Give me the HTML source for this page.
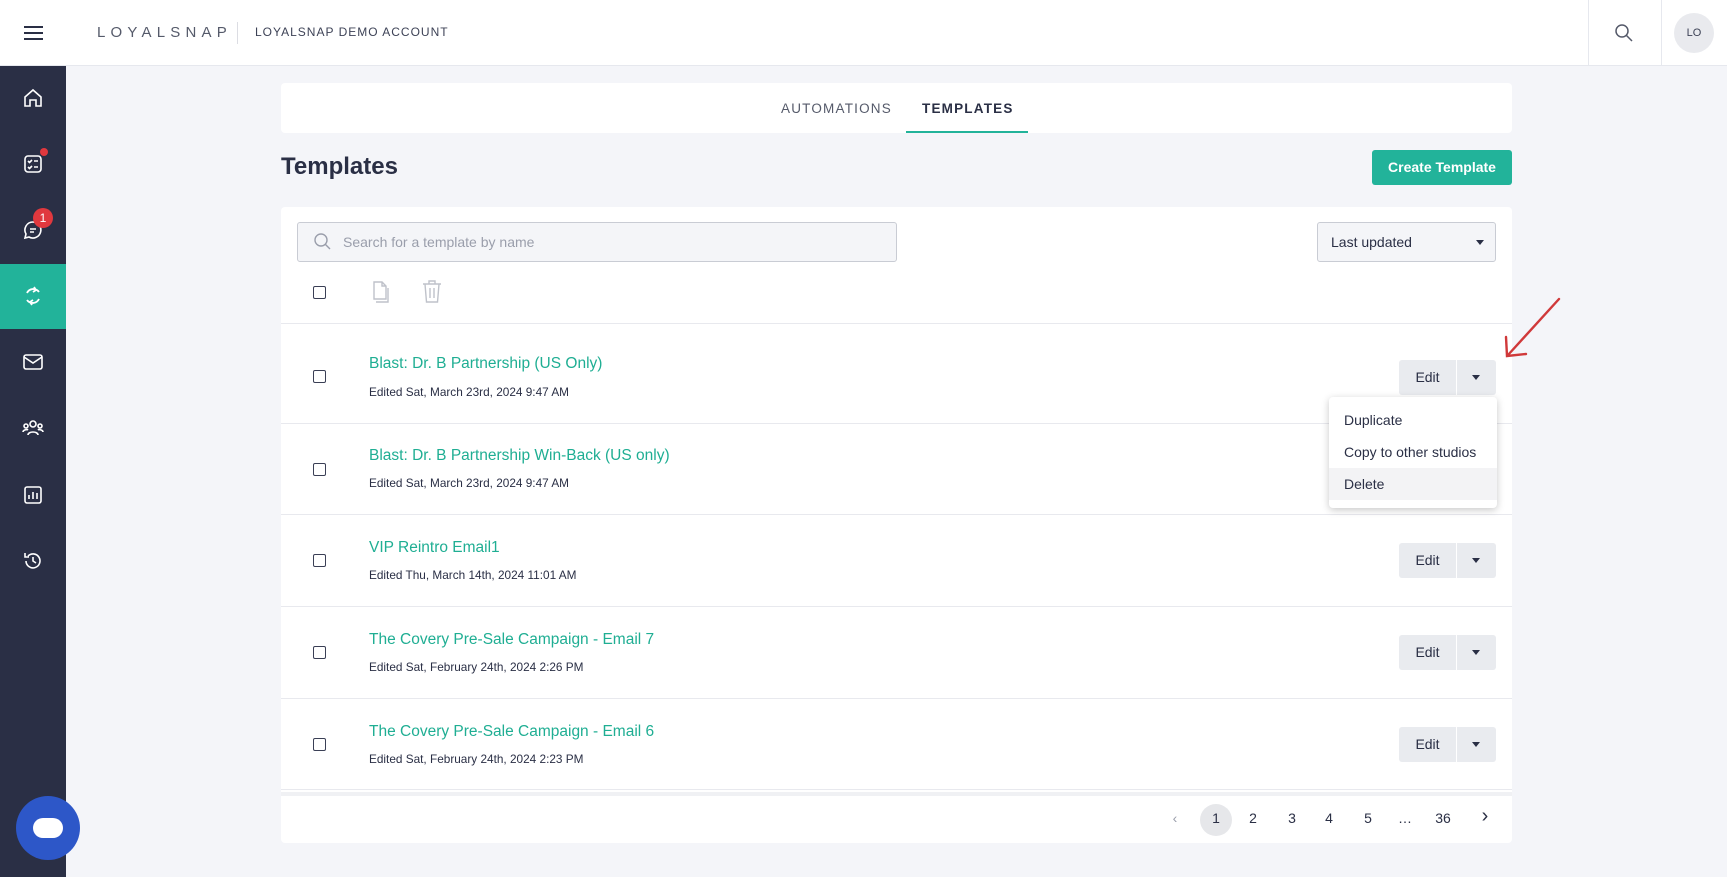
<!DOCTYPE html>
<html><head><meta charset="utf-8"><style>
*{box-sizing:border-box;margin:0;padding:0}
body{width:1727px;height:877px;overflow:hidden;background:#f4f5f9;font-family:"Liberation Sans",sans-serif;color:#2a2f45;position:relative}
.abs{position:absolute}
.hdr{left:0;top:0;width:1727px;height:66px;background:#fff;border-bottom:1px solid #e6e8ee}
.side{left:0;top:66px;width:66px;height:811px;background:#2a2f45}
.ic{position:absolute;left:21px;width:24px;height:24px}
.card{background:#fff;border-radius:4px}
.row{position:absolute;left:281px;width:1231px;border-top:1px solid #e8e9ee;background:#fff}
.cb{position:absolute;width:13px;height:13px;border:1.6px solid #3a3f55;border-radius:2px}
.t{position:absolute;left:88px;font-size:15.5px;color:#1fae93}
.d{position:absolute;left:88px;font-size:11.8px;color:#2a2f45}
.eb{position:absolute;left:1118px;width:97px;height:35px;background:#e9ebef;border-radius:3px;font-size:14px}
.eb span{position:absolute;left:0;width:57px;top:9px;text-align:center}
.eb i{position:absolute;left:57px;top:0;width:1px;height:35px;background:#fff}
.eb b{position:absolute;left:73px;top:15px;border-left:4px solid transparent;border-right:4px solid transparent;border-top:5px solid #2a2f45}
.pg{position:absolute;top:810px;font-size:14px;width:30px;text-align:center}
</style></head><body>
<div class="abs hdr">
 <div class="abs" style="left:24px;top:26px;width:19px;height:2px;background:#2a2f45;box-shadow:0 6px 0 #2a2f45,0 12px 0 #2a2f45"></div>
 <div class="abs" style="left:97px;top:24px;font-size:15px;letter-spacing:5.2px;color:#555a6a">LOYALSNAP</div>
 <div class="abs" style="left:237px;top:22px;width:1px;height:22px;background:#dcdde3"></div>
 <div class="abs" style="left:255px;top:25px;font-size:12px;letter-spacing:1px;color:#3d4256">LOYALSNAP DEMO ACCOUNT</div>
 <div class="abs" style="left:1588px;top:0;width:1px;height:66px;background:#e6e8ee"></div>
 <svg class="abs" style="left:1614px;top:23px" width="20" height="20" viewBox="0 0 20 20" fill="none" stroke="#555a6a" stroke-width="1.5"><circle cx="8" cy="8" r="6"/><path d="M12.5 12.5L18 18"/></svg>
 <div class="abs" style="left:1661px;top:0;width:1px;height:66px;background:#e6e8ee"></div>
 <div class="abs" style="left:1674px;top:13px;width:40px;height:40px;border-radius:50%;background:#e9eaee;font-size:11px;text-align:center;line-height:40px;color:#3d4256">LO</div>
</div>
<div class="abs side">
 <svg class="ic" style="top:20px" viewBox="0 0 24 24" fill="none" stroke="#fff" stroke-width="1.6"><path d="M4 11l8-7 8 7v9h-5v-6h-6v6H4z"/></svg>
 <svg class="ic" style="top:86px" viewBox="0 0 24 24" fill="none" stroke="#fff" stroke-width="1.6"><rect x="4" y="4" width="16" height="16" rx="3"/><path d="M7 9l1.5 1.5L11 8M13 9h4M7 15l1.5 1.5L11 14M13 15h4"/></svg>
 <div class="abs" style="left:40px;top:82px;width:8px;height:8px;border-radius:50%;background:#e0383e"></div>
 <svg class="ic" style="top:152px" viewBox="0 0 24 24" fill="none" stroke="#fff" stroke-width="1.6"><path d="M12 4a8 8 0 1 1-4 15l-4 1 1-4A8 8 0 0 1 12 4zM9 11h6M9 14h4"/></svg>
 <div class="abs" style="left:33px;top:142px;width:20px;height:20px;border-radius:50%;background:#e0383e;color:#fff;font-size:12px;text-align:center;line-height:20px">1</div>
 <div class="abs" style="left:0;top:198px;width:66px;height:65px;background:#22b39a"></div>
 <svg class="ic" style="top:218px" viewBox="0 0 24 24" fill="none" stroke="#fff" stroke-width="1.8"><path d="M18 8a7 7 0 0 0-12 1M6 16a7 7 0 0 0 12-1M13 3l2 3-3 2M11 21l-2-3 3-2"/></svg>
 <svg class="ic" style="top:284px" viewBox="0 0 24 24" fill="none" stroke="#fff" stroke-width="1.6"><rect x="3" y="5" width="18" height="14" rx="2"/><path d="M3 7l9 6 9-6"/></svg>
 <svg class="ic" style="top:350px" viewBox="0 0 24 24" fill="none" stroke="#fff" stroke-width="1.6"><circle cx="12" cy="8" r="3"/><circle cx="5" cy="10" r="2"/><circle cx="19" cy="10" r="2"/><path d="M7 19c0-4 10-4 10 0M2 16c0-2 4-3 5-2M22 16c0-2-4-3-5-2"/></svg>
 <svg class="ic" style="top:417px" viewBox="0 0 24 24" fill="none" stroke="#fff" stroke-width="1.6"><rect x="4" y="4" width="16" height="16" rx="2"/><path d="M8 16v-4M12 16V9M16 16v-6"/></svg>
 <svg class="ic" style="top:483px" viewBox="0 0 24 24" fill="none" stroke="#fff" stroke-width="1.6"><path d="M5 12a7 7 0 1 0 2-5M4 4v4h4M12 8v4l3 2"/></svg>
</div>
<div class="abs" style="left:16px;top:796px;width:64px;height:64px;border-radius:50%;background:#2d57c8"><div class="abs" style="left:17px;top:22px;width:30px;height:20px;border-radius:10px;background:#fff"></div></div>

<div class="abs card" style="left:281px;top:83px;width:1231px;height:50px">
 <div class="abs" style="left:500px;top:18px;font-size:13.5px;letter-spacing:1.2px;color:#555a6a">AUTOMATIONS</div>
 <div class="abs" style="left:641px;top:18px;font-size:13.5px;letter-spacing:1.2px;font-weight:bold;color:#2a2f45">TEMPLATES</div>
 <div class="abs" style="left:625px;top:48px;width:122px;height:2px;background:#22b39a"></div>
</div>
<div class="abs" style="left:281px;top:153px;font-size:24px;font-weight:bold;color:#2a2f45">Templates</div>
<div class="abs" style="left:1372px;top:150px;width:140px;height:35px;background:#22b39a;border-radius:3px;color:#fff;font-size:14px;font-weight:bold;text-align:center;line-height:35px">Create Template</div>

<div class="abs card" style="left:281px;top:207px;width:1231px;height:636px"></div>
<div class="abs" style="left:297px;top:222px;width:600px;height:40px;border:1px solid #c9ccd4;border-radius:3px;background:#f4f5f8"></div>
<svg class="abs" style="left:313px;top:232px" width="20" height="20" viewBox="0 0 20 20" fill="none" stroke="#9a9eab" stroke-width="1.4"><circle cx="8" cy="8" r="6"/><path d="M12.5 12.5L17 17"/></svg>
<div class="abs" style="left:343px;top:234px;font-size:14px;color:#9a9eab">Search for a template by name</div>
<div class="abs" style="left:1317px;top:222px;width:179px;height:40px;border:1px solid #c9ccd4;border-radius:3px;background:#f4f5f8;font-size:14px;padding:11px 0 0 13px">Last updated</div>
<div class="abs" style="left:1476px;top:240px;border-left:4px solid transparent;border-right:4px solid transparent;border-top:5px solid #2a2f45"></div>
<div class="cb" style="left:313px;top:286px"></div>
<svg class="abs" style="left:371px;top:280px" width="20" height="24" viewBox="0 0 20 24" fill="none" stroke="#bfc2ca" stroke-width="1.4"><path d="M3 2h8l4 4v13H3zM11 2v4h4M5 22h12V8"/></svg>
<svg class="abs" style="left:421px;top:279px" width="22" height="25" viewBox="0 0 22 25" fill="none" stroke="#bfc2ca" stroke-width="1.4"><path d="M2 5h18M8 5V2h6v3M4 5l1.5 18h11L18 5M9 9v10M13 9v10"/></svg>

<div class="row" style="top:323px;height:100px"><div class="cb" style="left:32px;top:46px"></div><div class="t" style="top:31px">Blast: Dr. B Partnership (US Only)</div><div class="d" style="top:61px">Edited Sat, March 23rd, 2024 9:47 AM</div><div class="eb" style="top:36px"><span>Edit</span><i></i><b></b></div></div>
<div class="row" style="top:423px;height:91px"><div class="cb" style="left:32px;top:39px"></div><div class="t" style="top:23px">Blast: Dr. B Partnership Win-Back (US only)</div><div class="d" style="top:52px">Edited Sat, March 23rd, 2024 9:47 AM</div></div>
<div class="row" style="top:514px;height:92px"><div class="cb" style="left:32px;top:39px"></div><div class="t" style="top:24px">VIP Reintro Email1</div><div class="d" style="top:53px">Edited Thu, March 14th, 2024 11:01 AM</div><div class="eb" style="top:28px"><span>Edit</span><i></i><b></b></div></div>
<div class="row" style="top:606px;height:92px"><div class="cb" style="left:32px;top:39px"></div><div class="t" style="top:24px">The Covery Pre-Sale Campaign - Email 7</div><div class="d" style="top:53px">Edited Sat, February 24th, 2024 2:26 PM</div><div class="eb" style="top:28px"><span>Edit</span><i></i><b></b></div></div>
<div class="row" style="top:698px;height:92px;border-bottom:1px solid #e8e9ee"><div class="cb" style="left:32px;top:39px"></div><div class="t" style="top:24px">The Covery Pre-Sale Campaign - Email 6</div><div class="d" style="top:53px">Edited Sat, February 24th, 2024 2:23 PM</div><div class="eb" style="top:28px"><span>Edit</span><i></i><b></b></div></div>
<div class="abs" style="left:281px;top:792px;width:1231px;height:4px;background:#f0f1f4"></div>

<div class="abs" style="left:1329px;top:397px;width:168px;height:111px;background:#fff;border-radius:4px;box-shadow:0 2px 8px rgba(0,0,0,.22)">
 <div class="abs" style="left:15px;top:15px;font-size:14px">Duplicate</div>
 <div class="abs" style="left:15px;top:47px;font-size:14px">Copy to other studios</div>
 <div class="abs" style="left:0;top:71px;width:168px;height:32px;background:#f3f3f5"></div>
 <div class="abs" style="left:15px;top:79px;font-size:14px">Delete</div>
</div>
<svg class="abs" style="left:1500px;top:294px" width="70" height="70" viewBox="0 0 70 70" fill="none" stroke="#d0393a" stroke-width="2.4" stroke-linecap="round"><path d="M59 5L8 61M6 43L7 62L26 60"/></svg>

<div class="pg" style="left:1160px;color:#9a9eab">&#8249;</div>
<div class="abs" style="left:1200px;top:804px;width:32px;height:32px;border-radius:50%;background:#e6e7ea"></div>
<div class="pg" style="left:1201px">1</div><div class="pg" style="left:1238px">2</div><div class="pg" style="left:1277px">3</div><div class="pg" style="left:1314px">4</div><div class="pg" style="left:1353px">5</div><div class="pg" style="left:1390px">…</div><div class="pg" style="left:1428px">36</div>
<div class="pg" style="left:1470px;font-size:20px;top:805px">&#8250;</div>
</body></html>
